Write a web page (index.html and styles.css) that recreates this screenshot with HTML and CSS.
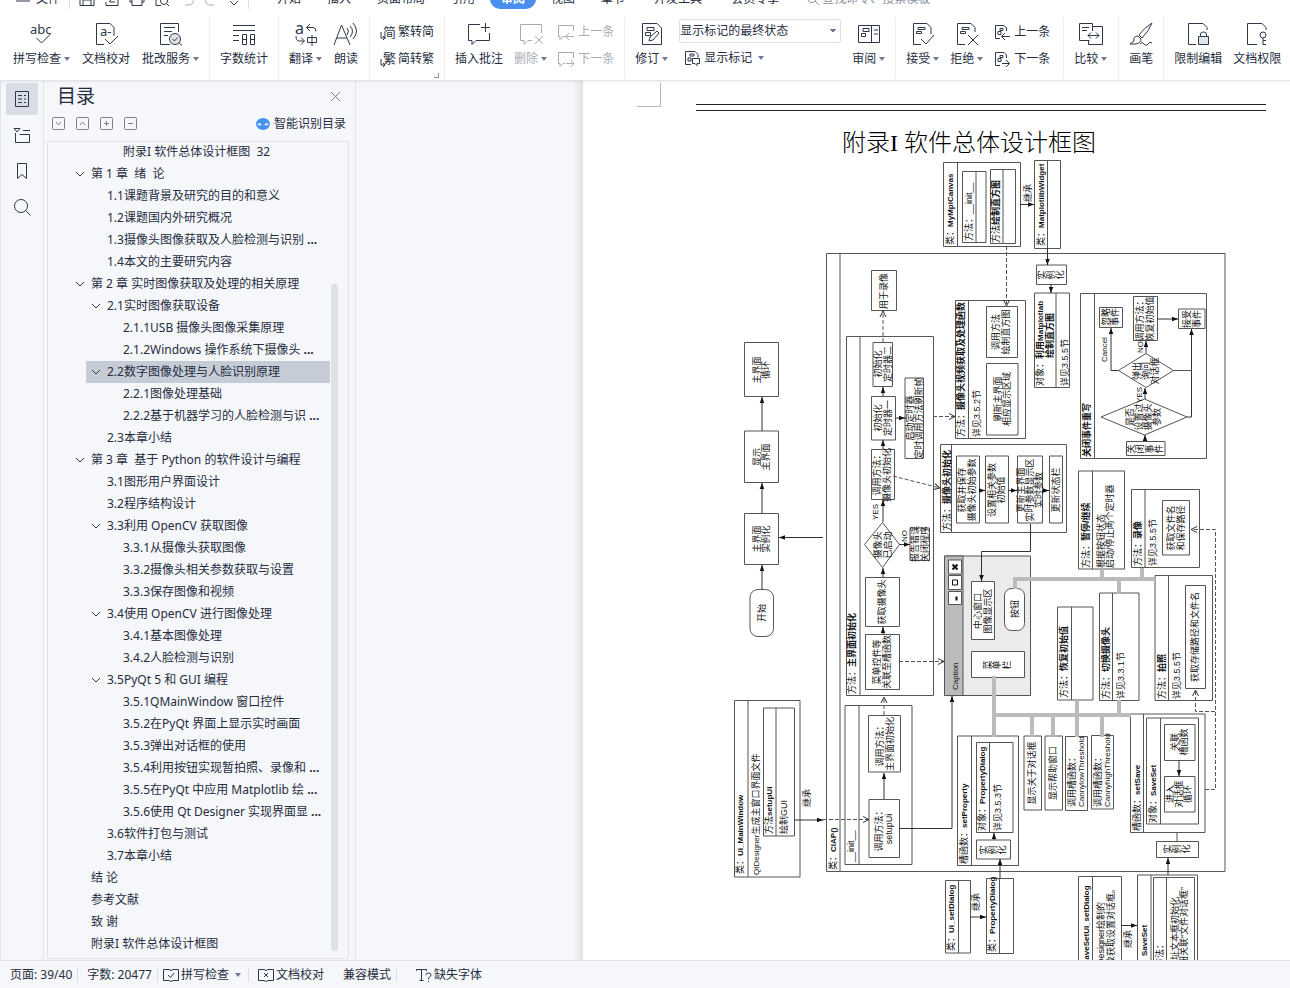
FILE: index.html
```html
<!DOCTYPE html>
<html lang="zh-CN">
<head>
<meta charset="utf-8">
<title>目录</title>
<link rel="stylesheet" href="styles.css">
</head>
<body>
<svg width="0" height="0" class="defs" aria-hidden="true">
  <symbol id="doc-small" viewBox="0 0 16 16"><path d="M6 14.500H1.500V1.500H10l2.500 2.500v3M4 7.500h3v3H4zM6 4.500h3v2H6z"/></symbol>
  <symbol id="chev" viewBox="0 0 10 10"><path d="M1 3l4 4 4-4"/></symbol>
</svg>
<header class="top">
  <nav class="tabs">
    <div class="quick">
      <button class="menu"><svg class="ic" width="14" height="14" viewBox="0 0 14 14"><path d="M0 4.500h14M0 9h14"/></svg>文件</button>
      <i class="bar"></i>
      <button aria-label="保存"><svg class="ic" width="16" height="16" viewBox="0 0 16 16"><path d="M1 1h11l3 3v10.500H1zM4 14V9h8v5"/></svg></button>
      <button aria-label="输出"><svg class="ic" width="16" height="16" viewBox="0 0 16 16"><path d="M2 11v3.500h12V1H5M5 11l4-4M6 11h5"/></svg></button>
      <button aria-label="打印"><svg class="ic" width="16" height="16" viewBox="0 0 16 16"><path d="M3 11H1V5h14v6h-2M3 8h10v6.500H3z"/></svg></button>
      <button aria-label="预览"><svg class="ic" width="16" height="16" viewBox="0 0 16 16"><path d="M7 14.500H2V1h10v4"/><circle cx="10" cy="10" r="3.500"/><path d="M13 13l2 2"/></svg></button>
      <button aria-label="撤销"><svg class="ic dim" width="16" height="16" viewBox="0 0 16 16"><path d="M2 5h8a4 4 0 0 1 0 9H6"/></svg></button>
      <button aria-label="恢复"><svg class="ic dim" width="16" height="16" viewBox="0 0 16 16"><path d="M14 5H6a4 4 0 0 0 0 9h4"/></svg></button>
      <button aria-label="更多"><svg class="ic" width="10" height="16" viewBox="0 0 10 16"><path d="M1 10l4 4 4-4"/></svg></button>
      <i class="bar"></i>
    </div>
    <div class="tablist">
      <button>开始</button><button>插入</button><button>页面布局</button><button>引用</button><button class="on">审阅</button><button>视图</button><button>章节</button><button class="addon">开发工具</button><button class="addon">会员专享</button>
    </div>
    <label class="find"><svg class="ic" width="14" height="14" viewBox="0 0 14 14"><circle cx="6" cy="6" r="4.500"/><path d="M9 9l4 4"/></svg><input type="text" placeholder="查找命令、搜索模板" aria-label="查找命令"></label>
  </nav>
  <div class="ribbon">
    <div class="group first">
      <button class="tool"><svg class="ic" width="24" height="24" viewBox="0 0 24 24"><text class="glyph" x="0" y="12">abc</text><path d="M6.500 16l5 5 9-9"/></svg><span>拼写检查<i class="arr"></i></span></button>
      <button class="tool"><svg class="ic" width="24" height="24" viewBox="0 0 24 24"><path d="M10 22.500H2.500v-21H16l4 4V14M11 17l5 5 8-8"/><text class="glyph" x="6" y="14">a-</text></svg><span>文档校对</span></button>
      <button class="tool"><svg class="ic" width="24" height="24" viewBox="0 0 24 24"><path d="M11 22.500H1.500v-21h18V10M5 5.500h11M5 9.500h8M5 13.500h4"/><circle class="fill" cx="16" cy="17" r="5.500"/><path d="M13.500 17l2 2 3-3.500M20 21l3 2.500"/></svg><span>批改服务<i class="arr"></i></span></button>
    </div>
    <div class="group">
      <button class="tool"><svg class="ic" width="24" height="24" viewBox="0 0 24 24"><path d="M1 3.500h22M1 8.500h22M1 13.500h6M1 18.500h6M10.500 12.500h4v10h-4zM18.500 12.500h4v10h-4zM10.500 17.500h4M18.500 17.500h4"/></svg><span>字数统计</span></button>
    </div>
    <div class="group">
      <button class="tool"><svg class="ic" width="24" height="24" viewBox="0 0 24 24"><text class="glyph big" x="1" y="12">a</text><path d="M16 2l-3.500 3.500L16 9M12.500 5.500H19q3 0 3 4M2 14q0 5 3 5h5M7 15.500l3.500 3.500L7 22.500M13.500 15.500h9v5h-9zM18 13v11"/></svg><span>翻译<i class="arr"></i></span></button>
      <button class="tool"><svg class="ic" width="26" height="24" viewBox="0 0 26 24"><path d="M1 23L8.500 3 17 23M4 16h10M14 6q3 3 0 7M17 4q5 5 0 11M20 1q7 8 0 16"/></svg><span>朗读</span></button>
    </div>
    <div class="group launcher">
      <div class="stack tight">
        <button class="row"><svg class="ic" width="16" height="16" viewBox="0 0 16 16"><text class="glyph" x="3" y="13">简</text><path d="M1 8v6h4M3 12l2 2-2 2"/></svg>繁转简</button>
        <button class="row"><svg class="ic" width="16" height="16" viewBox="0 0 16 16"><text class="glyph" x="3" y="12">繁</text><path d="M1 8v6h4M3 12l2 2-2 2"/></svg>简转繁</button>
      </div>
    </div>
    <div class="group">
      <button class="tool"><svg class="ic" width="24" height="24" viewBox="0 0 24 24"><path d="M13 2.500H1.500v16H5v4l4-4h13.500V11M14 5.500h9M18.500 1v9"/></svg><span>插入批注</span></button>
      <button class="tool dim" disabled><svg class="ic" width="24" height="24" viewBox="0 0 24 24"><path d="M13 18.500H9l-4 4v-4H1.500v-16h21V11M16 14l8 8M24 14l-8 8"/></svg><span>删除<i class="arr"></i></span></button>
      <div class="stack">
        <button class="row dim" disabled><svg class="ic" width="16" height="16" viewBox="0 0 16 16"><path d="M15.500 7V1.500H.500v11H2v3l3-3h2M16 12.500H8M11 9l-3.500 3.500L11 16"/></svg>上一条</button>
        <button class="row dim" disabled><svg class="ic" width="16" height="16" viewBox="0 0 16 16"><path d="M15.500 7V1.500H.500v11H2v3l3-3h2M8 12.500h8M13 9l3 3.500-3 3.500"/></svg>下一条</button>
      </div>
    </div>
    <div class="group">
      <button class="tool"><svg class="ic" width="24" height="24" viewBox="0 0 24 24"><path d="M2.500 1.500H17l4.500 4.500v16.500h-19zM7 5.500h7v3H7zM5.500 10.500h5v3h-5zM9 19l1-4 7-6 2 2-6 7z"/></svg><span>修订<i class="arr"></i></span></button>
      <div class="stack wide">
        <select aria-label="显示标记的状态"><option>显示标记的最终状态</option></select>
        <button class="row mark"><svg class="ic" width="16" height="16" viewBox="0 0 16 16"><path d="M7 14.500H1.500V1.500H11l3 3v3M4 8h3v3H4zM6 4h4v2H6zM8.500 8.500h7v5H13v2l-2-2H8.500z"/></svg>显示标记<i class="arr"></i></button>
      </div>
      <button class="tool"><svg class="ic" width="24" height="24" viewBox="0 0 24 24"><path d="M1.500 3.500h21v17h-21zM14.500 3.500v17M17 8h4M17 12h4M6 6.500h6v3H6zM4.500 11.500h4v3h-4z"/></svg><span>审阅<i class="arr"></i></span></button>
    </div>
    <div class="group changes">
      <button class="tool"><svg class="ic" width="24" height="24" viewBox="0 0 24 24"><path d="M10 22.500H2.500v-21H16l4 4V12M7 5.500h7v2H7zM5.500 9.500h5v2h-5zM10 17l5 5 8-9"/></svg><span>接受<i class="arr"></i></span></button>
      <button class="tool"><svg class="ic" width="24" height="24" viewBox="0 0 24 24"><path d="M10 22.500H2.500v-21H16l4 4V10M7 5.500h7v2H7zM5.500 9.500h5v2h-5zM13 13l10 10M23 13L13 23"/></svg><span>拒绝<i class="arr"></i></span></button>
      <div class="stack">
        <button class="row"><svg class="ic" width="16" height="16" viewBox="0 0 16 16"><use href="#doc-small"/><path d="M16 12.500H8M11 9l-3.500 3.500L11 16"/></svg>上一条</button>
        <button class="row"><svg class="ic" width="16" height="16" viewBox="0 0 16 16"><use href="#doc-small"/><path d="M8 12.500h7M12 9l3.500 3.500L12 16"/></svg>下一条</button>
      </div>
    </div>
    <div class="group compare">
      <button class="tool"><svg class="ic" width="26" height="24" viewBox="0 0 26 24"><path d="M14.500 9V1.500h-13v17h10M4 5.500h7M4 8.500h5M14.500 4.500h10v18h-14v-4M10 13.500h11M13 10.500l-3 3 3 3M18 10.500l3 3-3 3"/></svg><span>比较<i class="arr"></i></span></button>
    </div>
    <div class="group">
      <button class="tool"><svg class="ic" width="24" height="24" viewBox="0 0 24 24"><path d="M23 1q-8 5-13 12l3 3Q20 9 23 1zM9 14q-5 0-4 5l-4 3h6q5-1 5-5zM11 22q2-3 4 0t4 0 4-1"/></svg><span>画笔</span></button>
    </div>
    <div class="group last">
      <button class="tool"><svg class="ic" width="24" height="24" viewBox="0 0 24 24"><path d="M10 22.500H2.500v-21H17l4 4V8"/><path class="fill" d="M12.500 14.500h10v8h-10z"/><path d="M14.500 14v-2q0-2 3-2t3 2v2"/></svg><span>限制编辑</span></button>
      <button class="tool"><svg class="ic" width="24" height="24" viewBox="0 0 24 24"><path d="M12 22.500H2.500v-21H17l4 4V8"/><circle cx="18" cy="13" r="3"/><path d="M18 16v7M18 18.500h3M18 22.500h3"/></svg><span>文档权限</span></button>
    </div>
  </div>
</header>
<main class="work">
  <aside class="rail">
    <button class="on" aria-label="目录"><svg class="ic" width="16" height="18" viewBox="0 0 16 18"><path d="M1.500 1.500h13v15h-13zM4 5.500h4M4 9h4M4 12.500h4M10 5.500h2M10 9h2M10 12.500h2"/></svg></button>
    <button aria-label="章节"><svg class="ic" width="18" height="18" viewBox="0 0 18 18"><path d="M1 2.500h6L4 6zM10 4.500h7M2.500 7v9.500h14v-8h-10"/></svg></button>
    <button aria-label="书签"><svg class="ic" width="14" height="18" viewBox="0 0 14 18"><path d="M2.500 1.500h9v15L7 12.500l-4.500 4z"/></svg></button>
    <button aria-label="查找"><svg class="ic" width="18" height="18" viewBox="0 0 18 18"><circle cx="8" cy="8" r="6.500"/><path d="M12.500 12.500l5 5"/></svg></button>
  </aside>
  <section class="panel">
    <div class="head"><h2>目录</h2><button aria-label="关闭"><svg class="ic" width="11" height="11" viewBox="0 0 11 11"><path d="M1 1l9 9M10 1l-9 9"/></svg></button></div>
    <div class="opts">
      <button aria-label="展开"><svg class="ic" width="14" height="14" viewBox="0 0 14 14"><rect x=".5" y=".5" width="12" height="12" rx="1"/><path d="M4 5l2.500 3L9 5"/></svg></button>
      <button aria-label="收起"><svg class="ic" width="14" height="14" viewBox="0 0 14 14"><rect x=".5" y=".5" width="12" height="12" rx="1"/><path d="M4 8l2.500-3L9 8"/></svg></button>
      <button aria-label="增加"><svg class="ic" width="14" height="14" viewBox="0 0 14 14"><rect x=".5" y=".5" width="12" height="12" rx="1"/><path d="M4 6.500h5M6.500 4v5"/></svg></button>
      <button aria-label="减少"><svg class="ic" width="14" height="14" viewBox="0 0 14 14"><rect x=".5" y=".5" width="12" height="12" rx="1"/><path d="M4 6.500h5"/></svg></button>
      <button class="smart"><svg width="14" height="12" viewBox="0 0 14 12"><ellipse cx="7" cy="6" rx="7" ry="6" fill="#4a92f0"/><path d="M2 7q1.500-2 3 0M9 7q1.500-2 3 0" stroke="#fff" stroke-width="1.500" fill="none"/></svg>智能识别目录</button>
    </div>
    <div class="box">
      <ul class="toc">
        <li class="l3"><a href="#">附录I 软件总体设计框图&nbsp; 32</a></li>
        <li class="l1"><a href="#"><svg class="ic"><use href="#chev"/></svg>第 1 章&nbsp; 绪&nbsp; 论</a></li>
        <li class="l2"><a href="#">1.1课题背景及研究的目的和意义</a></li>
        <li class="l2"><a href="#">1.2课题国内外研究概况</a></li>
        <li class="l2"><a href="#">1.3摄像头图像获取及人脸检测与识别 <b>...</b></a></li>
        <li class="l2"><a href="#">1.4本文的主要研究内容</a></li>
        <li class="l1"><a href="#"><svg class="ic"><use href="#chev"/></svg>第 2 章 实时图像获取及处理的相关原理</a></li>
        <li class="l2"><a href="#"><svg class="ic"><use href="#chev"/></svg>2.1实时图像获取设备</a></li>
        <li class="l3"><a href="#">2.1.1USB 摄像头图像采集原理</a></li>
        <li class="l3"><a href="#">2.1.2Windows 操作系统下摄像头 <b>...</b></a></li>
        <li class="l2 sel"><a href="#"><svg class="ic"><use href="#chev"/></svg>2.2数字图像处理与人脸识别原理</a></li>
        <li class="l3"><a href="#">2.2.1图像处理基础</a></li>
        <li class="l3"><a href="#">2.2.2基于机器学习的人脸检测与识 <b>...</b></a></li>
        <li class="l2"><a href="#">2.3本章小结</a></li>
        <li class="l1"><a href="#"><svg class="ic"><use href="#chev"/></svg>第 3 章&nbsp; 基于 Python 的软件设计与编程</a></li>
        <li class="l2"><a href="#">3.1图形用户界面设计</a></li>
        <li class="l2"><a href="#">3.2程序结构设计</a></li>
        <li class="l2"><a href="#"><svg class="ic"><use href="#chev"/></svg>3.3利用 OpenCV 获取图像</a></li>
        <li class="l3"><a href="#">3.3.1从摄像头获取图像</a></li>
        <li class="l3"><a href="#">3.3.2摄像头相关参数获取与设置</a></li>
        <li class="l3"><a href="#">3.3.3保存图像和视频</a></li>
        <li class="l2"><a href="#"><svg class="ic"><use href="#chev"/></svg>3.4使用 OpenCV 进行图像处理</a></li>
        <li class="l3"><a href="#">3.4.1基本图像处理</a></li>
        <li class="l3"><a href="#">3.4.2人脸检测与识别</a></li>
        <li class="l2"><a href="#"><svg class="ic"><use href="#chev"/></svg>3.5PyQt 5 和 GUI 编程</a></li>
        <li class="l3"><a href="#">3.5.1QMainWindow 窗口控件</a></li>
        <li class="l3"><a href="#">3.5.2在PyQt 界面上显示实时画面</a></li>
        <li class="l3"><a href="#">3.5.3弹出对话框的使用</a></li>
        <li class="l3"><a href="#">3.5.4利用按钮实现暂拍照、录像和 <b>...</b></a></li>
        <li class="l3"><a href="#">3.5.5在PyQt 中应用 Matplotlib 绘 <b>...</b></a></li>
        <li class="l3"><a href="#">3.5.6使用 Qt Designer 实现界面显 <b>...</b></a></li>
        <li class="l2"><a href="#">3.6软件打包与测试</a></li>
        <li class="l2"><a href="#">3.7本章小结</a></li>
        <li class="l1"><a href="#">结 论</a></li>
        <li class="l1"><a href="#">参考文献</a></li>
        <li class="l1"><a href="#">致 谢</a></li>
        <li class="l1"><a href="#">附录I 软件总体设计框图</a></li>
      </ul>
      <div class="track"><i></i></div>
    </div>
  </section>
  <div class="gutter"></div>
  <article class="page">
    <div class="margin"><i class="corner"></i><i class="rule"></i></div>
    <h1>附录I 软件总体设计框图</h1>
    <svg class="diagram" viewBox="583 160 707 800" role="img" aria-label="软件总体设计框图">
      <defs>
        <marker id="a" viewBox="0 0 8 8" refX="8" refY="4" markerWidth="6" markerHeight="7" markerUnits="userSpaceOnUse" orient="auto"><path d="M0 1l8 3-8 3z" fill="#111" stroke="none"/></marker>
        <marker id="o" viewBox="0 0 8 8" refX="7" refY="4" markerWidth="8" markerHeight="8" markerUnits="userSpaceOnUse" orient="auto"><path d="M1 1l6 3-6 3" fill="none" stroke="#333" stroke-dasharray="none"/></marker>
      </defs>
      <g class="shape">
        <path d="M826.500 253.500H1225V871.500H826.500zM840 254V871"/>
        <path d="M744.500 342.500h34v54h-34zM744.500 431h34v51.500h-34zM744.500 513.500h34v51h-34z"/>
        <rect x="750" y="589.500" width="23.500" height="47" rx="8"/>
        <path d="M846.500 336.500h87v359h-87zM860 336v359"/>
        <path d="M871.500 270.500h25v40h-25zM873 342.500h19.500v44H873zM871.500 396.500h24V440h-24zM905 378h18.500v80.500H905zM871.500 449.500h23v50h-23zM910 528h19.500v32.500H910zM865.500 577.500h34v49h-34zM865.500 634.500h34v55h-34z"/>
        <path d="M882.500 522.500l17 22-17 23-18-23z"/>
        <path d="M845 705.500h67v159h-67zM859 705v159M868.500 715.500h32V772h-32zM869 799.500h30.500v58H869z"/>
        <path d="M734.500 700.500H800V877h-65.500zM748 700v177M763.500 708h31v128h-31zM776 708v128"/>
        <path d="M943.500 162.500h77v84h-77zM957.500 162v84M962.500 171.500H986v71h-23.500zM976 171v71M990.500 169.500h25v74h-25zM1003 169v74M1034.500 160.500h26v88h-26zM1047.500 160v88M1036.500 265h30v19.500h-30zM1034.500 293h35v94.500h-35zM1056 293v94"/>
        <path d="M955.500 300.500h70v138h-70zM968.500 300v138M986.500 306.500h31v51h-31zM986.500 363.500H1018V435h-31.500z"/>
        <path d="M1080.500 293.500h126v165h-126zM1094.500 293v165M1099.500 307.500h23v20h-23zM1133.500 296.500h24v44h-24zM1178.500 309H1205v19.500h-26.500zM1146 353.500l27.500 17-27.500 17-27.500-17zM1144.500 399l42.500 18-42.500 18-43.500-18zM1126.500 441.500H1165v14h-38.500z"/>
        <path d="M1078.500 471h46v98h-46zM1092.500 471v98M1131.500 489.500h68v78h-68zM1145 489v78M1162.500 500.500h27V555h-27z"/>
        <path d="M940.500 444.500h126v88h-126zM951.500 444v88M956.500 456h23v67h-23zM985.500 456h23v67h-23zM1017.500 456h25v67h-25zM1049.500 456h13v67h-13z"/>
        <path fill="#ebebeb" d="M944.500 556h86v139.500h-86z"/>
        <path fill="#bbb" d="M944.500 556H963v139.500h-18.500z"/>
        <path fill="#fff" d="M948.500 560h13v14h-13zM948.500 575.500h13v14h-13zM948.500 591.500h13v13h-13zM971.500 581.500h23v58h-23zM971.500 651.500h53v26h-53z"/>
        <path class="bold" d="M952.500 564.500l5 5M957.500 564.500l-5 5M956.500 596.500v4"/>
        <path class="square" d="M952.500 580h5v5h-5z"/>
        <rect x="1004.500" y="588.500" width="20" height="42" rx="7"/>
        <path d="M1057.500 607H1093v93h-35.500zM1071.500 607v93M1099.500 593H1139v107.500h-39.500zM1112.500 593v107M1155 575.500h57.500v125H1155zM1168.500 575v125M1185.500 585.500h20v103h-20z"/>
        <path d="M1130.500 714H1205v118.500h-74.500zM1143.500 714v118M1146.500 718h52v106h-52zM1160.500 718v106M1164.500 724.500H1195v36h-30.500zM1164.500 776.500H1195V812h-30.500zM1156.500 841.500h42v16h-42z"/>
        <path d="M1078.500 980V876.500h43V980M1092.500 876v100M1137.500 980V875h60v105M1151 875v100M1153.500 980V877.500h41V980M1166.500 877v100"/>
        <path d="M957.500 736h61v129.500h-61zM971.500 736v129M976.500 742.500H1013v90h-36.500zM989.500 742v90M976.500 840h34v19h-34zM1024 736h17.500v74H1024zM1045 736h17.500v74H1045zM1065.500 736.500h22v74h-22zM1091.500 735.500h22V809h-22zM945.500 880.500h25V953h-25zM958.500 880v73M986.500 878.500h27v75h-27zM999.500 878v75"/>
      </g>
      <path class="thick" d="M1015 589V579H1155M994 676V737M994 715H1131M1032 715V737M1053 715V737M1077 700V737M1102 715V737M1119 594V579M1119 700V715M1102 569V579M1142 568V579"/>
      <g class="link">
        <path d="M762 589V565"/><path d="M762 513V483"/><path d="M762 431V397"/><path d="M823 537.500H779"/><path d="M794 820H823"/><path d="M884 799V773"/><path d="M883 634V627"/><path d="M883 577V568"/><path d="M883 522V500"/><path d="M883 449V440"/><path d="M883 396V387"/><path d="M895 418H905"/><path d="M899 544.500H910"/><path d="M899 828.500H952V696"/>
        <path d="M1020 204.500H1034"/><path d="M1047.500 248V265"/><path d="M1051 284V293"/><path d="M1118 370.500H1111V328"/><path d="M1187 417H1191.500V329"/><path d="M1157 319H1178"/><path d="M1146 353V341"/><path d="M1145 399V388"/><path d="M1145 441V435"/><path d="M979 490.500H985"/><path d="M1008 490.500H1017"/><path d="M1042 490.500H1049"/><path d="M1030.500 524V551.500H981.500V581"/><path d="M1179 760V776"/><path d="M1168 875V858"/><path d="M1121 925.500H1137"/><path d="M970 917H986"/><path d="M1000 878V859"/><path d="M994 840V833"/>
      </g>
      <path class="shape" d="M1173 370.500H1191.500M1177 832V841"/>
      <g class="dash">
        <path d="M823 819.500H869"/><path d="M884 715V697"/><path d="M883 342V311"/><path d="M899 661.500H944"/><path d="M893 476L940 488"/><path d="M933 416.500H955"/><path d="M1006.500 246V306"/><path d="M1205 789.500H1215.500V529.500H1191"/><path d="M1215 711.500H1195.500V690"/>
      </g>
      <g class="words" transform="rotate(-90)">
        <g class="mid">
          <text x="-370" y="760">主界面</text><text x="-370" y="769">循环</text><text x="-457" y="760">显示</text><text x="-457" y="769">主界面</text><text x="-539" y="760">主界面</text><text x="-539" y="769">实例化</text><text x="-613" y="765">开始</text>
          <text x="-291" y="887">用于录像</text><text x="-364" y="881">初始化</text><text x="-364" y="891">定时器二</text><text x="-418" y="881">初始化</text><text x="-418" y="891">定时器一</text><text x="-418" y="913">启动定时器</text><text x="-418" y="922">定时调用方法刷新帧</text><text x="-473" y="880">调用方法：</text><text x="-475" y="890">摄像头初始化</text><text x="-545" y="881">摄像头</text><text x="-545" y="891">已启动</text><text x="-544" y="918">报告错误</text><text x="-544" y="928">关闭程序</text><text x="-602" y="885">获取摄像头</text><text x="-662" y="880">菜单控件等</text><text x="-662" y="890">关联至槽函数</text>
          <text x="-744" y="883">调用方法：</text><text x="-744" y="893">主界面初始化</text><text x="-829" y="882">调用方法：</text><text x="-829" y="892">setupUi</text>
          <text x="-332" y="999">调用方法</text><text x="-332" y="1009">绘制直方图</text><text x="-399" y="1001">刷新主界面</text><text x="-399" y="1010">相应显示区域</text><text x="-275" y="1045">实</text><text x="-275" y="1054">例</text><text x="-275" y="1063">化</text>
          <text x="-317" y="1109">忽略</text><text x="-317" y="1118">事件</text><text x="-319" y="1143">调用方法：</text><text x="-319" y="1153">恢复初始值</text><text x="-319" y="1190">接受</text><text x="-319" y="1200">事件</text><text x="-371" y="1140">弹出</text><text x="-371" y="1149">询问</text><text x="-371" y="1158">对话框</text><text x="-417" y="1133">是否</text><text x="-417" y="1142">设置过</text><text x="-417" y="1151">摄像头</text><text x="-417" y="1160">参数</text><text x="-449" y="1134">关</text><text x="-449" y="1143">闭</text><text x="-449" y="1153">事</text><text x="-449" y="1162">件</text>
          <text x="-528" y="1174">获取文件名</text><text x="-528" y="1184">和保存路径</text>
          <text x="-490" y="965">获取并保存</text><text x="-490" y="975">摄像头初始参数</text><text x="-490" y="995">设置相关参数</text><text x="-490" y="1004">初始值</text><text x="-490" y="1024">更新主界面</text><text x="-490" y="1033">实时参数显示区</text><text x="-490" y="1042">实时参数</text><text x="-490" y="1059">更新状态栏</text>
          <text x="-611" y="981">中心窗口</text><text x="-611" y="991">图像显示区</text><text x="-609" y="1018">按钮</text><text x="-665" y="991">菜</text><text x="-665" y="1000">单</text><text x="-665" y="1010">栏</text><text x="-637" y="1198">获取存储路径和文件名</text>
          <text x="-742" y="1178">关联</text><text x="-742" y="1187">槽函数</text><text x="-794" y="1173">进入</text><text x="-794" y="1182">对话框</text><text x="-794" y="1191">循环</text><text x="-849" y="1171">实</text><text x="-849" y="1180">例</text><text x="-849" y="1189">化</text><text x="-850" y="987">实</text><text x="-850" y="996">例</text><text x="-850" y="1005">化</text>
          <text x="-773" y="1035">显示关于对话框</text><text x="-773" y="1056">显示帮助窗口</text>
        </g>
        <text class="s" x="-520" y="878">YES</text><text class="s" x="-542" y="907">NO</text><text class="s" x="-362" y="1107">Cancel</text><text class="s" x="-403" y="1142">YES</text><text class="s" x="-353" y="1143">NO</text><text class="s" x="-690" y="958">Caption</text>
        <text x="-807" y="810">继承</text><text x="-202" y="1031">继承</text><text x="-911" y="979">继承</text><text x="-948" y="1131">继承</text>
        <text x="-874" y="743">类：<tspan class="b">Ui_MainWindow</tspan></text><text class="s" x="-875" y="759">QtDesigner<tspan class="n">生成主窗口界面文件</tspan></text><text x="-834" y="772">方法<tspan class="b">setupUi</tspan></text><text x="-834" y="787">绘制GUI</text>
        <text x="-870" y="836">类：<tspan class="b">CIAP()</tspan></text><text x="-862" y="854">__init__</text><text x="-694" y="855">方法：<tspan class="b n">主界面初始化</tspan></text>
        <text x="-245" y="953">类：<tspan class="b">MyMplCanvas</tspan></text><text x="-241" y="972">方法：__init__</text><text x="-243" y="999">方法<tspan class="b n">绘制直方图</tspan></text><text x="-246" y="1044">类：<tspan class="b">MatplotlibWidget</tspan></text>
        <text x="-437" y="964">方法：<tspan class="b n">摄像头视频获取及处理函数</tspan></text><text x="-437" y="980">详见3.5.2节</text><text x="-386" y="1043">对象：<tspan class="b n">利用</tspan><tspan class="b">Matplotlab</tspan></text><text class="b n" x="-358" y="1053">绘制直方图</text><text x="-386" y="1068">详见3.5.5节</text>
        <text class="b n" x="-457" y="1090">关闭事件重写</text><text x="-568" y="1089">方法：<tspan class="b n">暂停/继续</tspan></text><text x="-568" y="1104">根据按钮状态</text><text x="-568" y="1113">启动/停止两个定时器</text><text x="-566" y="1141">方法：<tspan class="b n">录像</tspan></text><text x="-566" y="1156">详见3.5.5节</text>
        <text x="-531" y="950">方法：<tspan class="b n">摄像头初始化</tspan></text><text x="-698" y="1067">方法：<tspan class="b n">恢复初始值</tspan></text><text x="-699" y="1109">方法：<tspan class="b n">切换摄像头</tspan></text><text x="-699" y="1124">详见3.3.1节</text><text x="-699" y="1165">方法：<tspan class="b n">拍照</tspan></text><text x="-699" y="1180">详见3.5.5节</text>
        <text x="-864" y="967">槽函数：<tspan class="b">setProperty</tspan></text><text x="-831" y="985">对象：<tspan class="b">PropertyDialog</tspan></text><text x="-831" y="1001">详见3.5.3节</text><text x="-807" y="1075">调用槽函数：</text><text class="s" x="-807" y="1084">CannylowThreshold</text><text x="-807" y="1101">调用槽函数：</text><text class="s" x="-807" y="1110">CannyhighThreshold</text>
        <text x="-831" y="1140">槽函数：<tspan class="b">setSave</tspan></text><text x="-823" y="1156">对象：<tspan class="b">SaveSet</tspan></text><text x="-951" y="954">类：<tspan class="b">Ui_setDialog</tspan></text><text x="-952" y="995">类：<tspan class="b">PropertyDialog</tspan></text>
        <text class="b" x="-965" y="1089">SaveSetUi_setDialog</text><text x="-965" y="1104">Designer绘制的</text><text x="-965" y="1114">象获取设置对话框。</text><text class="b" x="-956" y="1147">SaveSet</text><text x="-967" y="1163">方法：</text><text x="-960" y="1178">址文本框初始化</text><text x="-965" y="1187">钮关联“文件对话框”</text>
      </g>
    </svg>
  </article>
</main>
<footer class="status">
  <span>页面: 39/40</span><i class="bar"></i><span class="count">字数: 20477</span><i class="bar"></i>
  <button><svg class="ic" width="16" height="14" viewBox="0 0 16 14"><path d="M6 12.500H.500V1.500H6l2 1 2-1h5.500v11H10l-2 1zM5 7l2.500 2.500L11 5"/></svg>拼写检查<i class="arr"></i></button><i class="bar"></i>
  <button class="proof"><svg class="ic" width="16" height="14" viewBox="0 0 16 14"><path d="M6 12.500H.500V1.500H6l2 1 2-1h5.500v11H10l-2 1zM6 5l4 4M10 5L6 9"/></svg>文档校对</button>
  <button class="mode">兼容模式</button><i class="bar"></i>
  <button class="font"><svg class="ic" width="16" height="14" viewBox="0 0 16 14"><path d="M.500 3V1.500h10V3M5.500 1.500v11M3.500 12.500h4M10 7q0-2 2.500-2T15 7q0 1.500-2.500 3v1.500M12.500 13v1"/></svg>缺失字体</button>
</footer>
</body>
</html>
```

FILE: styles.css
```css
* { box-sizing: border-box; }
body {
  margin: 0;
  height: 100vh;
  display: flex;
  flex-direction: column;
  overflow: hidden;
  background: #f5f7fa;
  color: #262d3f;
  font: 12px/16px "Noto Sans", "Noto Sans CJK SC", sans-serif;
}
button, input, select { font: inherit; color: inherit; border: 0; background: none; padding: 0; margin: 0; }
button { display: flex; align-items: center; white-space: nowrap; }
.defs { position: absolute; }
.ic { fill: none; stroke: #2f374a; stroke-width: 1; flex: none; overflow: visible; }
.ic .fill { fill: #dfe3ea; }
.glyph { fill: #2f374a; stroke: none; font-size: 13px; }
.glyph.big { font-size: 16px; }
.bar { width: 1px; height: 14px; background: #dcdfe6; flex: none; }
.arr { width: 0; height: 0; border: 3px solid transparent; border-top: 4px solid #6f7890; border-bottom: 0; margin-left: 3px; }

.top { background: #fff; border-bottom: 1px solid #e2e4e8; flex: none; box-shadow: 0 1px 2px #00000012; z-index: 1; }
.tabs { height: 12px; overflow: hidden; display: flex; align-items: flex-end; }
.tabs > * { height: 24px; display: flex; align-items: center; flex: none; }
.tabs .quick { gap: 9px; width: 266px; padding: 0 4px 2px 16px; }
.tabs .quick .bar { height: 20px; }
.tabs .menu { gap: 6px; }
.tablist { gap: 4px; padding-bottom: 2px; }
.tablist button { padding: 0 11px; height: 20px; border-radius: 10px; }
.tablist .on { background: #4a8ff0; color: #fff; font-weight: 700; }
.tablist .addon { margin-left: 3px; }
.find { margin-left: 16px; gap: 2px; padding-bottom: 2px; color: #8a91a3; }
.find .ic { stroke: #8a91a3; }
.find input { width: 120px; }
.find input::placeholder { color: #8a91a3; }

.ribbon { display: flex; height: 68px; padding: 5px 0 1px; }
.group { display: flex; gap: 11px; padding: 5px 10px 0; border-right: 1px solid #eceef1; flex: none; }
.group.first { padding-left: 13px; gap: 12px; }
.group.changes { padding-right: 13px; }
.group.compare { padding-right: 11px; }
.group.last { border: 0; }
.tool { flex-direction: column; align-items: center; justify-content: flex-start; gap: 5px; height: 45px; }
.tool span { display: flex; align-items: center; }
.stack { display: flex; flex-direction: column; gap: 9px; padding-top: 1px; }
.row { gap: 4px; height: 18px; }
.tight .row { gap: 2px; }
.row .arr { margin-left: 2px; }
.dim { color: #a8abb3; }
.dim .ic, .ic.dim { stroke: #a8abb3; }
.launcher { background: linear-gradient(#8990a0, #8990a0) 64px 60px / 5px 1px no-repeat, linear-gradient(#8990a0, #8990a0) 68px 56px / 1px 5px no-repeat; }
.wide { gap: 6px; width: 162px; margin-top: -4px; }
select {
  height: 24px;
  width: 100%;
  padding: 0;
  border: 1px solid #dcdfe4;
  border-radius: 2px;
  appearance: none;
  background: linear-gradient(to bottom right, #6f7890 50%, transparent 50%) right 4px center / 3px 4px no-repeat, linear-gradient(to bottom left, #6f7890 50%, transparent 50%) right 7px center / 3px 4px no-repeat;
}
.mark { padding-left: 5px; }

.work { flex: 1; min-height: 0; display: flex; }
.rail { width: 44px; padding: 2px 5px; border-right: 1px solid #e1e4ea; border-left: 1px solid #e1e4ea; display: flex; flex-direction: column; gap: 4px; flex: none; }
.rail button { width: 32px; height: 32px; justify-content: center; border-radius: 2px; }
.rail .on { background: #d9dee6; }
.panel { width: 312px; flex: none; display: flex; flex-direction: column; border-right: 1px solid #e1e4ea; padding: 0 6px 1px 3px; }
.head { height: 30px; display: flex; align-items: center; justify-content: space-between; padding: 0 8px 0 10px; flex: none; }
.head h2 { margin: 0; font-size: 19px; line-height: 28px; font-weight: 400; }
.head .ic { stroke: #767d8d; }
.opts { height: 30px; display: flex; align-items: center; gap: 10px; padding: 0 3px 5px 5px; flex: none; }
.opts .ic { stroke: #7b8190; }
.opts .smart { margin-left: auto; gap: 4px; }
.box { flex: 1; min-height: 0; display: flex; border: 1px solid #dfe2e8; border-radius: 2px; overflow: hidden; }
.toc { list-style: none; margin: -1px 0 0; padding: 0; flex: 1; }
.toc li { height: 22px; }
.toc a { display: flex; align-items: center; height: 22px; padding-left: 5px; color: inherit; text-decoration: none; white-space: pre; }
.toc .ic { width: 10px; height: 10px; margin-right: 6px; }
.toc .l1 { margin-left: 22px; }
.toc .l2 { margin-left: 38px; }
.toc .l3 { margin-left: 54px; }
.toc a:not(:has(svg)) { padding-left: 21px; }
.toc .sel { background: #c5ccd5; }
.track { width: 18px; display: flex; padding: 142px 0 7px 1px; }
.track i { width: 7px; border-radius: 4px; background: #dee1e4; }
.gutter { width: 227px; flex: none; background: linear-gradient(to left, #dfe1e6, #f5f7fa 10px); }
.page { flex: 1; min-width: 0; background: #fff; overflow: hidden; }
.margin { display: flex; justify-content: space-between; padding: 2px 24px 0 54px; }
.corner { width: 24px; height: 24px; border: solid #b8b8b8; border-width: 0 1px 1px 0; }
.rule { width: 570px; height: 7px; margin-top: 21px; border: solid #222; border-width: 1px 0; }
.page h1 { margin: 15px 0 0 65px; text-align: center; font: 300 24px/34px "Liberation Serif", "Noto Sans CJK SC", serif; color: #000; }
.diagram { display: block; width: 100%; height: auto; }
.shape, .link, .dash { fill: none; stroke: #555; stroke-width: 1; }
.shape .bold { stroke: #111; stroke-width: 2; }
.shape .square { stroke: #111; }
.shape rect { fill: #fff; }
.thick { fill: none; stroke: #bbb; stroke-width: 4; }
.link { stroke: #333; }
.link path { marker-end: url(#a); }
.dash { stroke-dasharray: 4 2; }
.dash path { marker-end: url(#o); }
.words { font: 9px "Liberation Sans", "Noto Sans CJK SC", sans-serif; fill: #111; }
.words .mid { text-anchor: middle; }
.words .s { font-size: 8px; }
.words .b { font-weight: 700; font-size: 8px; }
.words .n { font-size: 9px; }

.status { height: 28px; flex: none; display: flex; align-items: center; gap: 5px; padding: 1px 10px 0; border-top: 1px solid #dfe2e8; }
.status .count { margin-left: 4px; }
.status button { gap: 2px; }
.status button .arr { margin: 0 2px 0 4px; }
.status .proof { margin-left: 4px; }
.status .mode { margin-left: 14px; }
.status .font { margin-left: 14px; }
```
